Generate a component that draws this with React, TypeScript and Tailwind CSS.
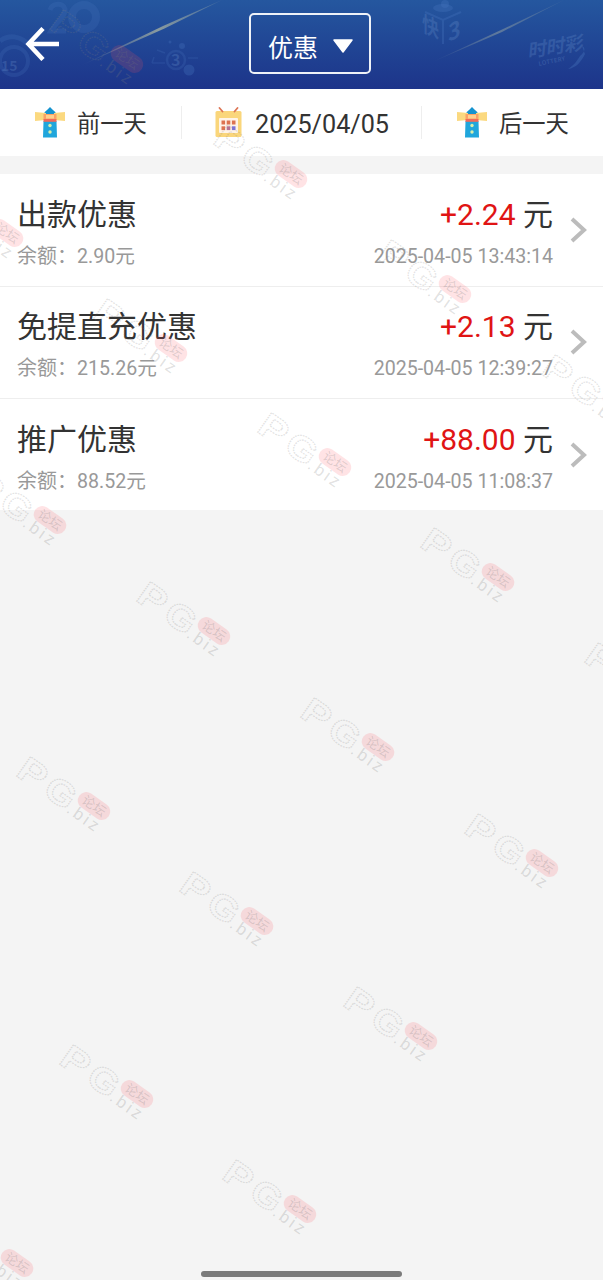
import React from 'react';

type BonusRecord = {
  title: string;
  balance: string;
  amount: string;
  time: string;
};

const records: BonusRecord[] = [
  { title: '出款优惠', balance: '2.90', amount: '+2.24', time: '2025-04-05 13:43:14' },
  { title: '免提直充优惠', balance: '215.26', amount: '+2.13', time: '2025-04-05 12:39:27' },
  { title: '推广优惠', balance: '88.52', amount: '+88.00', time: '2025-04-05 11:08:37' },
];

// centre of the red pill in every watermark stamp
const stamps = [
  [127, 59], [291, 174], [455, 289], [619, 404],
  [7, 233], [171, 348], [335, 462], [498, 577], [662, 692],
  [50, 520], [214, 631], [378, 747], [542, 863],
  [94, 806], [257, 921], [421, 1036],
  [137, 1094], [300, 1209], [17, 1263],
];

const HeaderArt: React.FC = () => (
  <svg className="absolute inset-0" width="603" height="89" viewBox="0 0 603 89">
    <defs>
      <linearGradient id="streakA" gradientUnits="userSpaceOnUse" x1="80" y1="66" x2="222" y2="0">
        <stop offset="0" stopColor="#8fa3a8" stopOpacity="0" />
        <stop offset="0.55" stopColor="#a3aea0" stopOpacity="0.8" />
        <stop offset="1" stopColor="#8fa3a8" stopOpacity="0.3" />
      </linearGradient>
      <linearGradient id="streakB" gradientUnits="userSpaceOnUse" x1="430" y1="63" x2="564" y2="0">
        <stop offset="0" stopColor="#7d94a8" stopOpacity="0" />
        <stop offset="0.5" stopColor="#8798a0" stopOpacity="0.6" />
        <stop offset="1" stopColor="#7d94a8" stopOpacity="0.2" />
      </linearGradient>
    </defs>
    <g fill="none" stroke="#4a78c0" strokeOpacity="0.22">
      <path d="M50 10c2-7 13-8 15-1 1 7-9 14-14 22h15" strokeWidth="5" />
      <circle cx="84" cy="17" r="12" strokeWidth="8" />
      <circle cx="14" cy="61" r="14" strokeWidth="4" />
      <path d="M0 41c9-7 20-5 28 3" strokeWidth="5" />
      <circle cx="176" cy="60" r="9" strokeWidth="2.5" />
      <path d="M152 63h13M154 57l-2 6M188 58h10M157 50l8 3" strokeWidth="1.5" />
    </g>
    <g fill="#4a78c0" fillOpacity="0.3">
      <circle cx="189" cy="70" r="5.5" />
      <circle cx="182" cy="46" r="3" />
      <circle cx="170" cy="42" r="1.5" />
      <ellipse cx="443" cy="8" rx="10" ry="4" />
      <circle cx="445" cy="4" r="4" />
    </g>
    <path d="M425 12l18 8 18-8M443 20v24" fill="none" stroke="#4a78c0" strokeOpacity="0.3" strokeWidth="2" />
    <g fill="#6790cc" fillOpacity="0.28" fontFamily="'Noto Sans CJK SC', sans-serif" fontWeight="700">
      <text x="1" y="71" fontSize="14">15</text>
      <text x="171" y="66" fontSize="16">3</text>
      <text transform="translate(422 31) skewY(24) scale(0.85 1.1)" fontSize="20">快</text>
      <text transform="translate(448 42) skewY(-24) scale(0.9 1)" fontSize="24">3</text>
      <text transform="translate(528 58) rotate(-9) skewX(-14)" fontSize="19" textLength="56">时时彩</text>
      <text transform="translate(539 66) rotate(-12)" fontSize="6" textLength="27">LOTTERY</text>
    </g>
    <path d="M582 46c4 2 3 6-2 10-3 5-6 9-12 13 8-1 13-7 17-15" fill="#4a78c0" fillOpacity="0.35" />
    <path d="M80 66L163 26 222 0 164.5 28.5z" fill="url(#streakA)" />
    <path d="M430 63L501 30 564 0 502 32z" fill="url(#streakB)" />
  </svg>
);

const Lighthouse: React.FC = () => (
  <svg width="30" height="31" viewBox="0 0 30 31" className="shrink-0">
    <path d="M9 9V7q0-2 3-4l3-3 3 3q3 2 3 4v2z" fill="#1593cf" />
    <path d="M8.5 14h13l.5 16.5H8z" fill="#20a6dc" />
    <path d="M0 5l11 1v7L0 14zM30 5L19 6v7l11 1z" fill="#fbd980" />
    <rect x="8.5" y="7" width="13" height="5.5" fill="#fba266" />
    <rect x="11" y="8" width="8" height="3.5" fill="#ffd08d" />
    <rect x="8.5" y="12" width="13" height="2.8" fill="#ef6a5a" />
    <circle cx="15" cy="18.5" r="1.7" fill="#d6efae" />
    <circle cx="15" cy="25" r="1.7" fill="#d6efae" />
  </svg>
);

const CalendarIcon: React.FC = () => (
  <svg width="27" height="31" viewBox="0 0 27 31" className="shrink-0">
    <rect x="0.5" y="4" width="26" height="26" rx="1.5" fill="#fad67b" />
    <rect x="4" y="11" width="19" height="15" rx="1" fill="#fff4e8" />
    <path d="M4.5 1l3 3.5M22.5 1l-3 3.5" stroke="#dd7554" strokeWidth="1.8" strokeLinecap="round" />
    <g fill="#dd7350">
      <rect x="6.5" y="13.5" width="3.6" height="4" />
      <rect x="11.7" y="13.5" width="3.6" height="4" />
      <rect x="16.9" y="13.5" width="3.6" height="4" />
      <rect x="6.5" y="19.3" width="3.6" height="3.8" />
      <rect x="11.7" y="19.3" width="3.6" height="3.8" fill="#b77391" />
      <rect x="16.9" y="19.3" width="3.6" height="3.8" fill="#7d73d8" />
    </g>
  </svg>
);

const Header: React.FC = () => (
  <header className="relative h-[89px] bg-gradient-to-b from-[#25579f] to-[#1d348a]">
    <HeaderArt />
    <div className="relative grid h-full grid-cols-[1fr_auto_1fr] items-center">
      <button className="mb-[2px] ml-[25px] justify-self-start text-white" aria-label="返回">
        <svg width="34" height="34" viewBox="0 0 34 34" fill="none" stroke="currentColor" strokeWidth="4.5">
          <path d="M18 1.5L3.5 17 18 32.5M3.5 17H34" />
        </svg>
      </button>
      <button className="ml-[17px] mt-[-2px] flex h-[61px] w-[122px] items-center rounded-[5px] border-2 border-[#eef2f8] pl-[17px] text-[25px] text-white">
        <span className="mt-[9px] leading-none">优惠</span>
        <svg className="ml-[14px] mt-[5px]" width="22" height="14" viewBox="0 0 22 14">
          <path d="M2 1h18L11 13z" fill="#fff" stroke="#fff" strokeWidth="1.5" strokeLinejoin="round" />
        </svg>
      </button>
    </div>
  </header>
);

const DateBar: React.FC = () => (
  <nav className="flex h-[67px] items-center bg-white text-[23.3px] text-[#333]">
    <button className="flex w-[181px] items-center gap-3 pl-[35px]">
      <Lighthouse />
      <span className="pt-1">前一天</span>
    </button>
    <button className="flex h-[33px] w-[241px] items-center gap-3 border-x border-[#eee] pl-[33px]">
      <CalendarIcon />
      <span className="pl-px pt-1 text-[25.2px]">2025/04/05</span>
    </button>
    <button className="flex items-center gap-3 pl-[35px]">
      <Lighthouse />
      <span className="pt-1">后一天</span>
    </button>
  </nav>
);

const RecordRow: React.FC<{ record: BonusRecord }> = ({ record }) => (
  <li className="flex h-[112.5px] items-center border-b border-[#eee] bg-white pl-[17px] pr-4 last:h-[111px] last:border-b-0">
    <div className="flex flex-1 flex-col gap-[6px] pt-2">
      <div className="flex items-center justify-between text-[30px] leading-10 text-[#333]">
        <span>{record.title}</span>
        <span>
          <span className="text-[#e01414]">{record.amount}</span> 元
        </span>
      </div>
      <div className="flex items-center justify-between text-[19.6px] leading-8 text-[#999]">
        <span>
          <span className="text-xl">余额：</span>
          {record.balance}元
        </span>
        <span>{record.time}</span>
      </div>
    </div>
    <svg className="ml-[17px] shrink-0" width="17" height="26" viewBox="0 0 17 26">
      <path d="M2 2l12 11L2 24" fill="none" stroke="#bcbcbc" strokeWidth="4" />
    </svg>
  </li>
);

const Watermark: React.FC = () => (
  <svg className="pointer-events-none absolute inset-0" width="603" height="1280" viewBox="0 0 603 1280">
    {stamps.map(([x, y]) => (
      <g key={`${x}-${y}`} transform={`translate(${x} ${y}) rotate(35)`} fontFamily="'Liberation Sans', sans-serif">
        <g fill="none" stroke="#808080" strokeOpacity="0.22" strokeWidth="1.3" strokeDasharray="1.6 0.9" fontWeight="700" fontSize="35">
          <text transform="translate(-83 20) scale(1.2 1)">P</text>
          <text transform="translate(-50 20) scale(1.12 1)">G</text>
        </g>
        <text x="-20" y="21" fontSize="17" fill="#808080" fillOpacity="0.24" textLength="35">.biz</text>
        <rect x="-18" y="-8.5" width="36" height="17" rx="8.5" fill="#ff5060" fillOpacity="0.16" />
        <text x="-13" y="4.5" fontSize="13" fill="#777" fillOpacity="0.24" fontFamily="'Noto Sans CJK SC', sans-serif">论坛</text>
      </g>
    ))}
  </svg>
);

const App: React.FC = () => {
  return (
    <div className="relative flex h-[1280px] w-[603px] flex-col overflow-hidden bg-[#f4f4f4] font-[Roboto,'Noto_Sans_CJK_SC',sans-serif]">
      <Header />
      <DateBar />
      <ul className="mt-[18px]">
        {records.map((record) => (
          <RecordRow key={record.time} record={record} />
        ))}
      </ul>
      <div className="mb-[3px] mt-auto h-[6px] w-[201px] self-center rounded-full bg-[#7b7b7b]" />
      <Watermark />
    </div>
  );
};

export default App;
